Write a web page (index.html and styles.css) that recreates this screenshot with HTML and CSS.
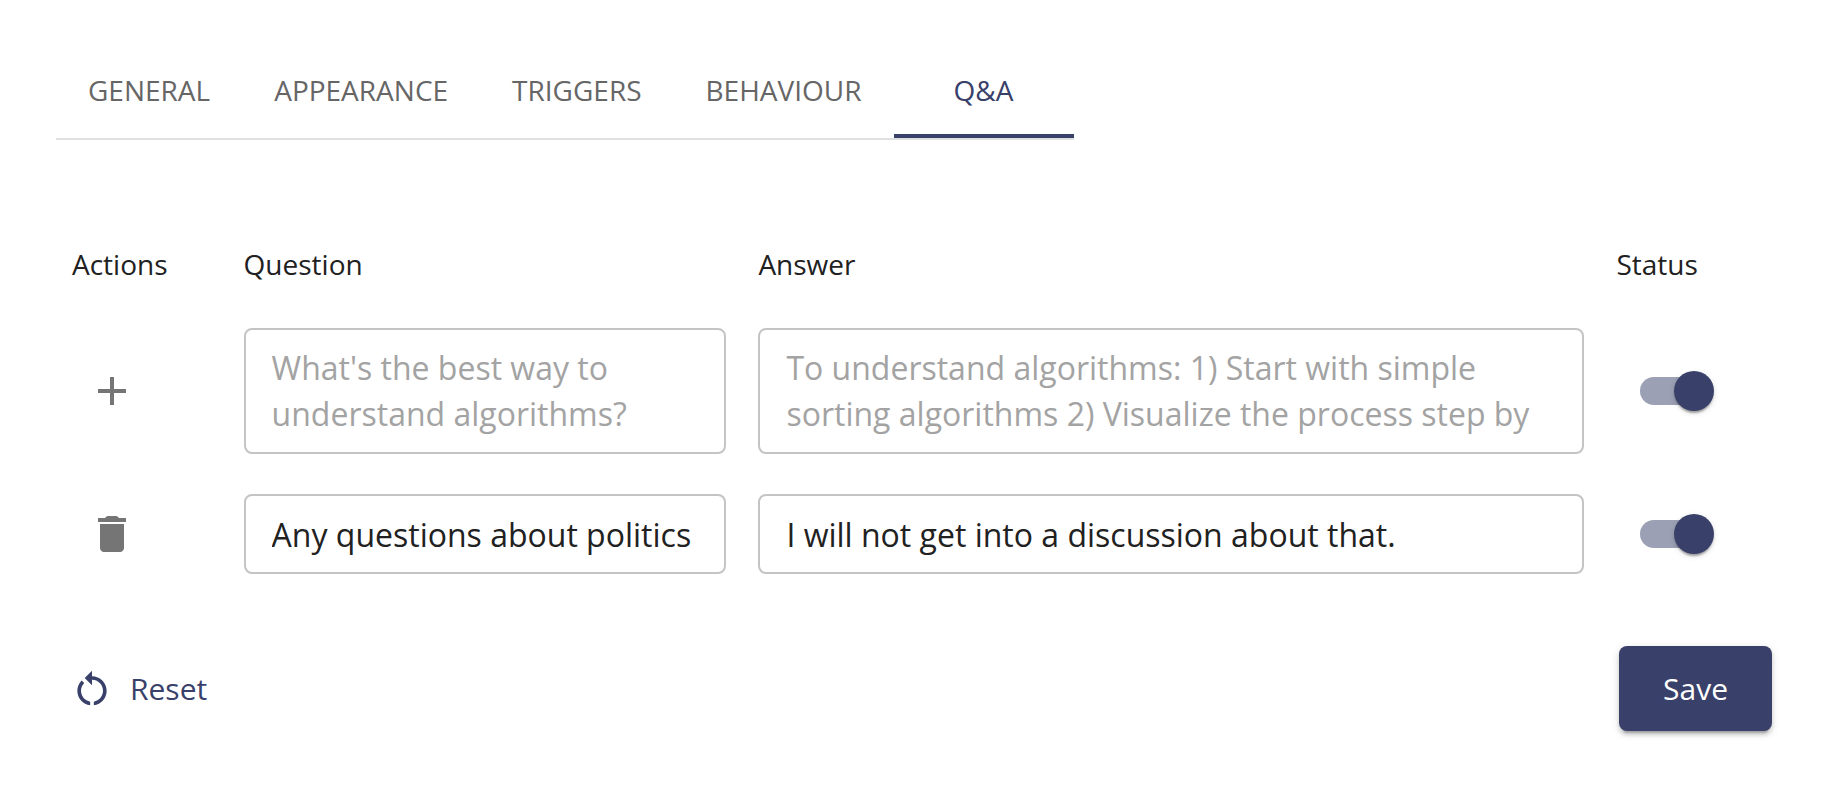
FILE: index.html
```html
<!DOCTYPE html>
<html lang="en">
<head>
<meta charset="utf-8">
<title>Q&amp;A settings</title>
<link rel="stylesheet" href="styles.css">
</head>
<body>
<main class="page">
  <div class="tabs" role="tablist">
    <button class="tab" type="button" role="tab" aria-selected="false">GENERAL</button>
    <button class="tab" type="button" role="tab" aria-selected="false">APPEARANCE</button>
    <button class="tab" type="button" role="tab" aria-selected="false">TRIGGERS</button>
    <button class="tab" type="button" role="tab" aria-selected="false">BEHAVIOUR</button>
    <button class="tab tab-active" type="button" role="tab" aria-selected="true">Q&amp;A</button>
  </div>

  <form>
    <table class="qa-table">
      <colgroup>
        <col class="col-side"><col class="col-question"><col class="col-answer"><col class="col-side">
      </colgroup>
      <thead>
        <tr>
          <th scope="col">Actions</th>
          <th scope="col" id="question">Question</th>
          <th scope="col" id="answer">Answer</th>
          <th scope="col" id="status">Status</th>
        </tr>
      </thead>
      <tbody>
        <tr>
          <td>
            <button class="icon-button" type="button" aria-label="Add">
              <svg class="icon" viewBox="0 0 24 24" aria-hidden="true"><path d="M19 13h-6v6h-2v-6H5v-2h6V5h2v6h6v2z"/></svg>
            </button>
          </td>
          <td><textarea class="field" rows="2" aria-labelledby="question" placeholder="What's the best way to understand algorithms?"></textarea></td>
          <td><textarea class="field" rows="2" aria-labelledby="answer" placeholder="To understand algorithms: 1) Start with simple sorting algorithms 2) Visualize the process step by"></textarea></td>
          <td><input class="switch" type="checkbox" role="switch" aria-labelledby="status" checked></td>
        </tr>
        <tr>
          <td>
            <button class="icon-button" type="button" aria-label="Delete">
              <svg class="icon" viewBox="0 0 24 24" aria-hidden="true"><path d="M6 19c0 1.1.9 2 2 2h8c1.1 0 2-.9 2-2V7H6v12zM19 4h-3.5l-.71-.71c-.18-.18-.44-.29-.7-.29H9.910c-.26 0-.52.11-.7.29L8.5 4H5v2h14V4z"/></svg>
            </button>
          </td>
          <td><input class="field" type="text" aria-labelledby="question" value="Any questions about politics"></td>
          <td><input class="field" type="text" aria-labelledby="answer" value="I will not get into a discussion about that."></td>
          <td><input class="switch" type="checkbox" role="switch" aria-labelledby="status" checked></td>
        </tr>
      </tbody>
    </table>

    <div class="form-actions">
      <button class="button button-text" type="button">
        <svg class="reset-icon" viewBox="0 0 24 24" aria-hidden="true"><path d="M12 5V2L8 6l4 4V7c3.31 0 6 2.690 6 6 0 2.970-2.170 5.430-5 5.910v2.020c3.950-.49 7-3.850 7-7.930 0-4.420-3.580-8-8-8zM6 13c0-1.650.67-3.150 1.760-4.240L6.340 7.340C4.900 8.790 4 10.790 4 13c0 4.080 3.050 7.440 7 7.930v-2.020c-2.830-.48-5-2.940-5-5.910z"/></svg>
        Reset
      </button>
      <button class="button button-filled" type="submit">Save</button>
    </div>
  </form>
</main>
</body>
</html>
```
FILE: styles.css
```css
:root {
  --primary: #39416a;
  --text: #212121;
  --muted: #666;
  --icon: #757575;
  --border: #c4c4c4;
}

* { box-sizing: border-box; }

body {
  margin: 0;
  background: #fff;
  color: var(--text);
  font-family: "Open Sans", sans-serif;
  font-size: 28px;
}

button, input, textarea { font-family: inherit; }

.page { padding: 42px 60px 56px 56px; }

.tabs {
  display: flex;
  width: fit-content;
  border-bottom: 2px solid #e0e0e0;
}

.tab {
  min-width: 180px;
  height: 96px;
  padding: 4px 32px 0;
  border: 0;
  border-bottom: 4px solid transparent;
  background: none;
  color: var(--muted);
  font-size: 28px;
  cursor: pointer;
}

.tab-active {
  border-bottom-color: var(--primary);
  color: var(--primary);
}

.qa-table {
  width: 100%;
  margin-top: 80px;
  table-layout: fixed;
  border-collapse: collapse;
}

.col-side { width: 10%; }
.col-question { width: 30%; }
.col-answer { width: 50%; }

.qa-table th,
.qa-table td {
  padding: 20px 16px;
  text-align: left;
  vertical-align: middle;
}

.qa-table th {
  font-weight: 400;
  line-height: 48px;
}

.field {
  display: block;
  width: 100%;
  padding: 15px 26px;
  border: 2px solid var(--border);
  border-radius: 8px;
  background: none;
  color: var(--text);
  font-size: 32px;
  line-height: 46px;
  resize: none;
  overflow: hidden;
}

input.field { height: 80px; }

.field::placeholder {
  color: #a3a3a3;
  opacity: 1;
}

.icon-button {
  display: flex;
  padding: 16px;
  border: 0;
  border-radius: 50%;
  background: none;
  color: var(--icon);
  cursor: pointer;
}

.icon {
  width: 48px;
  height: 48px;
  fill: currentColor;
}

.switch {
  appearance: none;
  display: flex;
  align-items: center;
  justify-content: flex-end;
  width: 68px;
  height: 28px;
  margin: 0 24px;
  border-radius: 14px;
  background: #9ca0b5;
  cursor: pointer;
}

.switch::before {
  content: "";
  flex: none;
  width: 40px;
  height: 40px;
  margin-right: -6px;
  border-radius: 50%;
  background: var(--primary);
  box-shadow: 0 4px 2px -2px rgba(0, 0, 0, 0.2), 0 2px 2px rgba(0, 0, 0, 0.14), 0 2px 6px rgba(0, 0, 0, 0.12);
}

.form-actions {
  display: flex;
  justify-content: space-between;
  margin-top: 52px;
}

.button {
  display: flex;
  align-items: center;
  height: 85px;
  border: 0;
  border-radius: 8px;
  font-size: 30px;
  cursor: pointer;
}

.button-text {
  gap: 16px;
  padding: 0 14px;
  background: none;
  color: var(--primary);
}

.button-filled {
  padding: 0 44px;
  background: var(--primary);
  color: #fff;
  box-shadow: 0 6px 2px -4px rgba(0, 0, 0, 0.2), 0 4px 4px rgba(0, 0, 0, 0.14), 0 2px 10px rgba(0, 0, 0, 0.12);
}

.reset-icon {
  width: 44px;
  height: 44px;
  fill: currentColor;
}
```
